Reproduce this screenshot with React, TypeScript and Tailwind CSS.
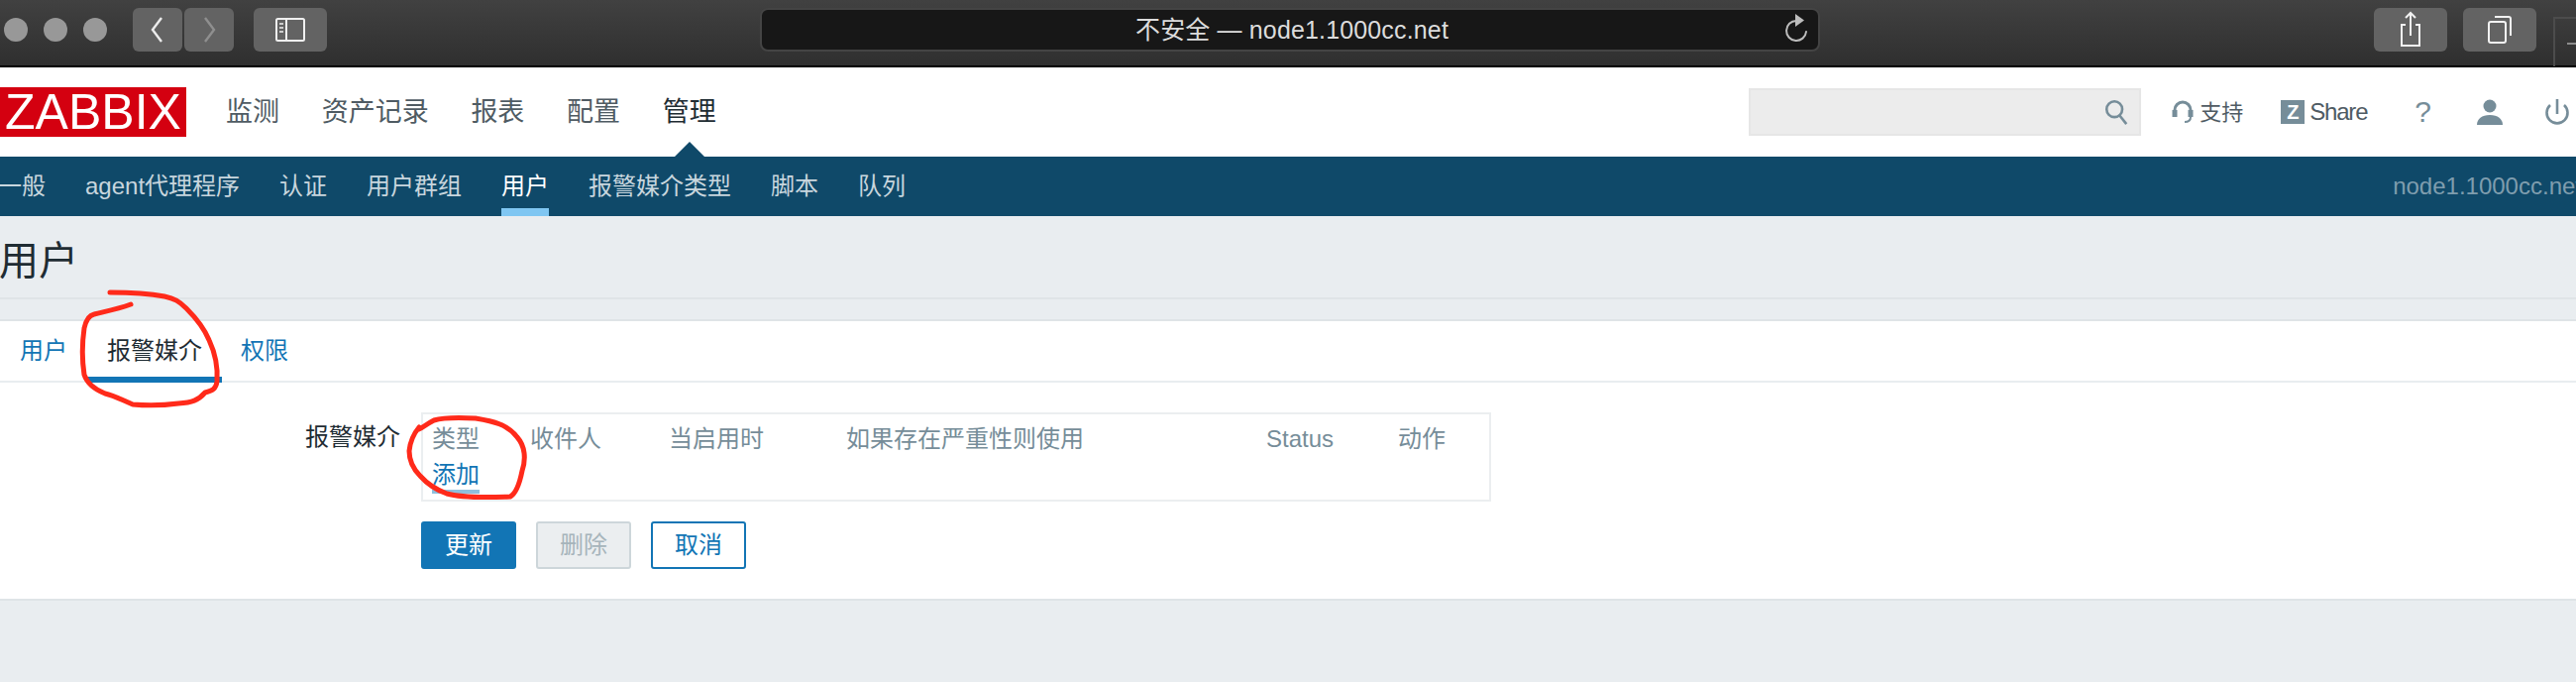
const cjk = "font-['Liberation_Sans','Noto_Sans_CJK_SC',sans-serif]";

function ChromeBtn({ className = "", children }: { className?: string; children?: React.ReactNode }) {
  return <div className={`flex h-[44px] items-center justify-center rounded-[6px] bg-[#636363] ${className}`}>{children}</div>;
}

function BrowserBar() {
  return (
    <div className="flex h-[68px] w-full items-start border-b-2 border-black bg-gradient-to-b from-[#414141] to-[#2f2f2f] pt-2">
      <div className="ml-1 mt-[10px] flex gap-4">
        <div className="h-6 w-6 rounded-full bg-[#989898]" />
        <div className="h-6 w-6 rounded-full bg-[#989898]" />
        <div className="h-6 w-6 rounded-full bg-[#989898]" />
      </div>
      <ChromeBtn className="ml-[26px] w-[50px]">
        <svg width="20" height="28" viewBox="0 0 20 28" fill="none" stroke="#ececec" strokeWidth="2.4"><path d="M14 2 5 14l9 12" /></svg>
      </ChromeBtn>
      <ChromeBtn className="ml-[2px] w-[50px]">
        <svg width="20" height="28" viewBox="0 0 20 28" fill="none" stroke="#8f8f8f" strokeWidth="2.4"><path d="M6 2l9 12-9 12" /></svg>
      </ChromeBtn>
      <ChromeBtn className="ml-5 w-[74px]">
        <svg width="32" height="26" viewBox="0 0 32 26" fill="none" stroke="#f0f0f0" strokeWidth="2"><rect x="2" y="2" width="28" height="22" rx="1.5" /><path d="M12 2v22" /><path d="M5 7h4M5 11h4M5 15h4" strokeWidth="1.6" /></svg>
      </ChromeBtn>
      <div className="ml-[437px] flex h-[44px] w-[1070px] items-center rounded-[8px] border-2 border-[#444] bg-[#171717]">
        <span className={`ml-[377px] whitespace-nowrap text-[25px] leading-none tracking-[0.15px] text-[#dcdcdc] ${cjk}`}>不安全 — node1.1000cc.net</span>
        <svg className="ml-auto mr-[8px]" width="28" height="36" viewBox="0 0 28 36" fill="none" stroke="#bdbdbd" strokeWidth="2"><path d="M14 9a10 10 0 1 0 10 11" strokeLinecap="round" /><path d="M13 2l9 6.5-9 6.500z" fill="#bdbdbd" stroke="none" /></svg>
      </div>
      <ChromeBtn className="ml-auto w-[74px]">
        <svg width="26" height="38" viewBox="0 0 26 38" fill="none" stroke="#f2f2f2" strokeWidth="2"><path d="M8 14H4v21h18V14h-4" /><path d="M13 25V2M8 7l5-5 5 5" /></svg>
      </ChromeBtn>
      <ChromeBtn className="ml-4 w-[74px]">
        <svg width="28" height="30" viewBox="0 0 28 30" fill="none" stroke="#f2f2f2" strokeWidth="2"><rect x="3" y="7" width="17" height="21" rx="2" /><path d="M9 2h14a2 2 0 0 1 2 2v17" /></svg>
      </ChromeBtn>
      <div className="ml-[17px] mt-[9px] flex h-[50px] w-[23px] items-center border-l-2 border-t-2 border-[#4c4c4c] pl-[12px]">
        <div className="mt-[2px] h-[2px] w-[11px] bg-[#8c8c8c]" />
      </div>
    </div>
  );
}

function Header() {
  const items = ["监测", "资产记录", "报表", "配置"];
  return (
    <div className={`flex h-[90px] items-center bg-white ${cjk}`}>
      <div className="flex h-[50px] w-[188px] items-center justify-center bg-[#d40010] font-['Liberation_Sans',sans-serif] text-[50px] leading-none text-white">ZABBIX</div>
      <div className="ml-10 flex gap-[42.7px] text-[27px] text-[#4f5b63]">
        {items.map((t) => <span key={t}>{t}</span>)}
        <span className="relative text-[#1f2c33]">
          管理
          <span className="absolute left-[11px] top-[50px] h-0 w-0 border-x-[16px] border-b-[16px] border-x-transparent border-b-[#0f4969]" />
        </span>
      </div>
      <div className="ml-auto flex h-[48px] w-[396px] items-center justify-end border-2 border-[#e6e6e6] bg-[#ececec] pr-[10px]">
        <svg width="26" height="26" viewBox="0 0 26 28" fill="none" stroke="#768d99" strokeWidth="2.8"><circle cx="11" cy="11" r="8.500" /><path d="M16 17l8 10" /></svg>
      </div>
      <svg className="ml-[31px]" width="22" height="26" viewBox="0 0 22 26" fill="none" stroke="#768d99" strokeWidth="3"><path d="M3 15V11a8 8 0 0 1 16 0v4" /><path d="M3 11v7M19 11v7" strokeWidth="5" /><path d="M19 18c0 4-3 5-6 5" strokeWidth="2" /></svg>
      <span className="ml-[6px] text-[22px] text-[#4f5b63]">支持</span>
      <span className="ml-[38px] flex h-[24px] w-[24px] items-center justify-center bg-[#768d99] font-['Liberation_Sans',sans-serif] text-[20px] font-bold leading-none text-white">Z</span>
      <span className="ml-[5px] text-[24px] tracking-[-1.2px] text-[#4f5b63]">Share</span>
      <span className="ml-[48px] font-['Liberation_Sans',sans-serif] text-[30px] leading-none text-[#768d99]">?</span>
      <svg className="ml-[46px]" width="26" height="26" viewBox="0 0 26 26" fill="#768d99"><circle cx="13" cy="7" r="6.500" /><path d="M0 26c0-6 5-10 13-10s13 4 13 10z" /></svg>
      <svg className="ml-[42px] mr-[6px]" width="26" height="28" viewBox="0 0 26 28" fill="none" stroke="#768d99" strokeWidth="2.6"><path d="M13 1v15" /><path d="M6 7a10.500 10.500 0 1 0 14 0" /></svg>
    </div>
  );
}

function SubNav() {
  const items = [
    ["一般", false], ["agent代理程序", false], ["认证", false], ["用户群组", false],
    ["用户", true], ["报警媒介类型", false], ["脚本", false], ["队列", false],
  ] as const;
  return (
    <div className={`flex h-[60px] items-stretch bg-[#0f4969] text-[24px] ${cjk}`}>
      <div className="-ml-[2px] flex gap-10">
        {items.map(([t, active]) => (
          <span key={t} className={`flex items-center whitespace-nowrap border-b-8 pt-2 ${active ? "border-[#7fc6f2] text-white" : "border-transparent text-[#c8d6de]"}`}>{t}</span>
        ))}
      </div>
      <span className="ml-auto -mr-[6px] self-center whitespace-nowrap text-[#7f9dae]">node1.1000cc.net</span>
    </div>
  );
}

function Tabs() {
  return (
    <div className="flex h-[62px] items-stretch border-b-2 border-[#e9edf0] pl-5 text-[24px]">
      <span className="flex items-center text-[#1275b5]">用户</span>
      <span className="relative ml-[40px] flex items-center text-[#1f2c33]">
        报警媒介
        <span className="absolute -left-[20px] -right-[20px] -bottom-[2px] h-[6px] bg-[#1275b5]" />
      </span>
      <span className="ml-[39px] flex items-center text-[#1275b5]">权限</span>
    </div>
  );
}

function MediaTable() {
  const cols = [
    ["类型", "w-[99px]"], ["收件人", "w-[140px]"], ["当启用时", "w-[179px]"],
    ["如果存在严重性则使用", "w-[424px]"], ["Status", "w-[133px]"], ["动作", "w-[60px]"],
  ];
  return (
    <div className="h-[90px] w-[1080px] border-2 border-[#ebeef0] pl-[9px]">
      <div className="mt-[10px] flex h-[30px] items-center text-[24px] leading-none text-[#768d99]">
        {cols.map(([t, w]) => <span key={t} className={`${w} whitespace-nowrap`}>{t}</span>)}
      </div>
      <div className="mt-[5px] flex">
        <span className="border-b-4 border-[#8fbfdd] text-[24px] leading-[31px] text-[#1275b5]">添加</span>
      </div>
    </div>
  );
}

function Buttons() {
  return (
    <div className="mt-5 flex gap-5 text-[24px]">
      <button className="flex h-12 w-24 items-center justify-center rounded-[3px] bg-[#1275b5] text-white">更新</button>
      <button className="flex h-12 w-24 items-center justify-center rounded-[3px] border-2 border-[#cdd6da] bg-[#ebeef0] text-[#a6b4bb]">删除</button>
      <button className="flex h-12 w-24 items-center justify-center rounded-[3px] border-2 border-[#1275b5] bg-white text-[#1275b5]">取消</button>
    </div>
  );
}

function Marks() {
  return (
    <svg className="absolute left-0 top-0" width="2600" height="688" fill="none" stroke="#ff2a1a" strokeWidth="5" strokeLinecap="round" strokeLinejoin="round">
      <path d="M111 295C130 295 150 296 166 299C176 301 181 304 188 311C197 320 206 331 211 343C218 358 220 372 219 385C218 392 215 394 207 396C200 404 194 406 180 407C165 409 145 409 134 408C122 403 115 399 106 397C96 393 88 387 85 378C83 365 83 345 85 331C87 322 90 318 95 317C107 314 118 312 132 307" />
      <path d="M423 431C418 437 414 445 413 455C413 465 416 472 424 480C432 489 440 494 451 498C465 502 490 502 515 501C522 497 525 485 527 475C531 463 530 450 522 441C512 428 498 425 480 422C462 421 448 421 438 424C430 428 426 432 423 433" />
    </svg>
  );
}

export default function App() {
  return (
    <div className={`relative h-[688px] w-[2600px] overflow-hidden bg-[#e9edf0] ${cjk}`}>
      <BrowserBar />
      <Header />
      <SubNav />
      <div className="flex h-[84px] items-center border-b-2 border-[#dfe4e7]">
        <h1 className="-ml-[1px] pt-[7px] text-[40px] font-normal leading-none text-[#1f2c33]">用户</h1>
      </div>
      <div className="mt-5 h-[284px] border-y-2 border-[#dfe4e7] bg-white">
        <Tabs />
        <div className="mt-[30px] flex">
          <span className="mt-[6px] w-[404px] whitespace-nowrap pt-1 text-right text-[24px] leading-[30px] text-[#1f2c33]">报警媒介</span>
          <div className="ml-[21px]">
            <MediaTable />
            <Buttons />
          </div>
        </div>
      </div>
      <Marks />
    </div>
  );
}
